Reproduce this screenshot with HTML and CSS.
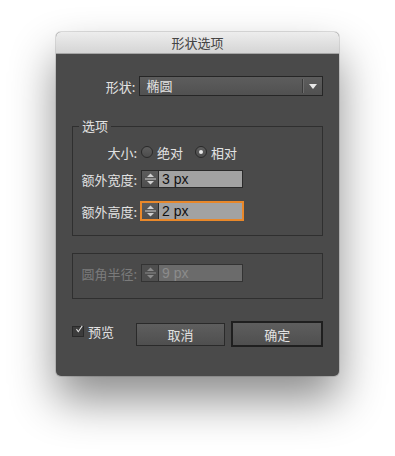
FILE: index.html
```html
<!DOCTYPE html>
<html lang="zh">
<head>
    <meta charset="UTF-8">
    <title>形状选项</title>
    <link rel="stylesheet" href="styles.css">
</head>
<body>

<div class="dialog">
    <div class="titlebar">形状选项</div>

    <div class="content">
        <div class="row shape-row">
            <label class="label">形状:</label>
            <div class="select">
                <span class="select-value">椭圆</span>
                <span class="select-divider"></span>
                <svg class="select-arrow" width="8" height="5" viewBox="0 0 8 5"><polygon points="0,0 8,0 4,5" fill="#e8e8e8"/></svg>
            </div>
        </div>

        <fieldset class="group">
            <legend>选项</legend>

            <div class="row size-row">
                <label class="label">大小:</label>
                <span class="radio"></span><span class="radio-text">绝对</span>
                <span class="radio checked"></span><span class="radio-text">相对</span>
            </div>

            <div class="row field-row">
                <label class="label">额外宽度:</label>
                <div class="number">
                    <span class="spinner">
                        <svg width="17" height="16" viewBox="0 0 17 16">
                            <polygon points="5,6 12,6 8.5,2.5" fill="#d0d0d0"/>
                            <line x1="3" y1="8" x2="14" y2="8" stroke="#cfcfcf" stroke-width="1"/>
                            <polygon points="5,10 12,10 8.5,13.5" fill="#d0d0d0"/>
                        </svg>
                    </span>
                    <span class="value">3 px</span>
                </div>
            </div>

            <div class="row field-row">
                <label class="label">额外高度:</label>
                <div class="number focused">
                    <span class="spinner">
                        <svg width="17" height="16" viewBox="0 0 17 16">
                            <polygon points="5,6 12,6 8.5,2.5" fill="#d0d0d0"/>
                            <line x1="3" y1="8" x2="14" y2="8" stroke="#cfcfcf" stroke-width="1"/>
                            <polygon points="5,10 12,10 8.5,13.5" fill="#d0d0d0"/>
                        </svg>
                    </span>
                    <span class="value">2 px</span>
                </div>
            </div>
        </fieldset>

        <div class="group disabled">
            <div class="row field-row">
                <label class="label">圆角半径:</label>
                <div class="number">
                    <span class="spinner">
                        <svg width="17" height="16" viewBox="0 0 17 16">
                            <polygon points="5,6 12,6 8.5,2.5" fill="#8a8a8a"/>
                            <line x1="3" y1="8" x2="14" y2="8" stroke="#8a8a8a" stroke-width="1"/>
                            <polygon points="5,10 12,10 8.5,13.5" fill="#8a8a8a"/>
                        </svg>
                    </span>
                    <span class="value">9 px</span>
                </div>
            </div>
        </div>

        <div class="footer">
            <label class="preview">
                <span class="checkbox">
                    <svg width="11" height="11" viewBox="0 0 11 11"><polyline points="2,5 4.5,8.5 10,0.5" fill="none" stroke="#e8e8e8" stroke-width="1.4"/></svg>
                </span>
                预览
            </label>
            <button class="btn cancel">取消</button>
            <button class="btn ok">确定</button>
        </div>
    </div>
</div>

</body>
</html>
```

FILE: styles.css
```css
* {
    margin: 0;
    padding: 0;
    box-sizing: border-box;
}

html, body {
    height: 100%;
}

body {
    background-color: #ffffff;
    font-family: "Liberation Sans", "Noto Sans CJK SC", sans-serif;
    font-size: 13px;
    padding-top: 32px;
}

.dialog {
    width: 283px;
    height: 344px;
    margin-left: 56px;
    border-radius: 5px;
    background-color: #4a4a4a;
    box-shadow: 0 24px 45px rgba(0, 0, 0, 0.45), 0 0 0 1px rgba(0, 0, 0, 0.12);
    overflow: hidden;
}

.titlebar {
    height: 22px;
    line-height: 22px;
    text-align: center;
    color: #444444;
    background: linear-gradient(#ededed, #d5d5d5);
    border-bottom: 1px solid #a5a5a5;
    font-family: "Noto Sans CJK SC", sans-serif;
}

.content {
    padding: 22px 16px 0 16px;
    color: #e2e2e2;
    font-family: "Noto Sans CJK SC", sans-serif;
}

.row {
    display: flex;
    align-items: center;
}

.label {
    width: 65px;
    margin-right: 4px;
    text-align: right;
    white-space: nowrap;
}

.shape-row {
    height: 20px;
}

.select {
    width: 188px;
    height: 20px;
    display: flex;
    align-items: center;
    border: 1px solid #262626;
    background: linear-gradient(#5d5d5d, #515151);
}

.select-value {
    flex: 1;
    padding-left: 6px;
    line-height: 18px;
}

.select-divider {
    width: 2px;
    height: 14px;
    border-left: 1px solid #3a3a3a;
    border-right: 1px solid #6c6c6c;
}

.select-arrow {
    margin: 0 5px 0 5px;
}

.group {
    margin-top: 22px;
    width: 251px;
    border: 1px solid #2f2f2f;
    min-width: 0;
    padding: 0 0 15px 0;
}

.group legend {
    margin-left: 6px;
    padding: 0 3px;
    line-height: 16px;
}

.group .label {
    width: 64px;
}

.size-row {
    height: 16px;
    margin-top: 10px;
}

.radio {
    width: 12px;
    height: 12px;
    border-radius: 50%;
    border: 1px solid #2a2a2a;
    background: linear-gradient(#5e5e5e, #4c4c4c);
    margin-right: 4px;
    display: flex;
    justify-content: center;
    align-items: center;
}

.radio.checked::after {
    content: "";
    width: 4px;
    height: 4px;
    border-radius: 50%;
    background-color: #e8e8e8;
}

.radio-text {
    margin-right: 12px;
}

.field-row {
    height: 18px;
    margin-top: 10px;
}

.field-row + .field-row {
    margin-top: 14px;
}

.number {
    width: 102px;
    height: 18px;
    display: flex;
    border: 1px solid #2a2a2a;
}

.number.focused {
    border-color: #e9882a;
    box-shadow: 0 0 0 1px #e9882a;
}

.spinner {
    width: 17px;
    height: 16px;
    background: linear-gradient(#5c5c5c, #4e4e4e);
    border-right: 1px solid #2a2a2a;
}

.spinner svg {
    display: block;
}

.value {
    flex: 1;
    background-color: #a2a2a2;
    color: #111111;
    font-family: "Liberation Sans", sans-serif;
    font-size: 14px;
    line-height: 16px;
    padding-left: 3px;
}

.group.disabled {
    margin-top: 17px;
    height: 46px;
}

.group.disabled .field-row {
    margin-top: 10px;
}

.group.disabled .label {
    color: #7b7b7b;
}

.group.disabled .number {
    border-color: #333333;
}

.group.disabled .spinner {
    background: #4e4e4e;
    border-right-color: #333333;
}

.group.disabled .value {
    background-color: #6b6b6b;
    color: #8c8c8c;
}

.footer {
    display: flex;
    align-items: center;
    margin-top: 22px;
}

.preview {
    display: flex;
    align-items: center;
    width: 64px;
    margin-top: -6px;
}

.checkbox {
    width: 12px;
    height: 11px;
    margin-right: 4px;
    border: 1px solid #2a2a2a;
    background-color: #3c3c3c;
    display: flex;
    align-items: center;
    justify-content: center;
}

.checkbox svg {
    display: block;
    margin-top: -3px;
    margin-left: 2px;
}

.btn {
    font-family: "Noto Sans CJK SC", sans-serif;
    font-size: 13px;
    color: #e2e2e2;
    background: linear-gradient(#5e5e5e, #4f4f4f);
    cursor: pointer;
}

.cancel {
    width: 90px;
    height: 23px;
    border: 1px solid #2a2a2a;
}

.ok {
    width: 92px;
    height: 26px;
    margin-left: 6px;
    border: 2px solid #1f1f1f;
}
```
